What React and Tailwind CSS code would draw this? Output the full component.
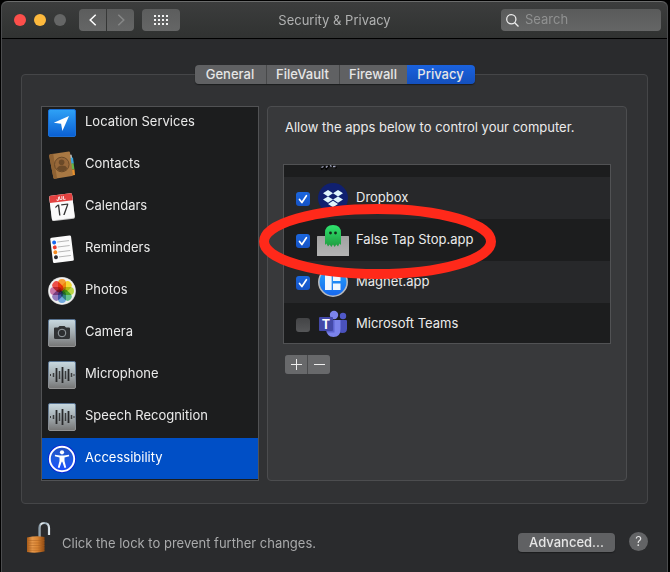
import React from "react";

function LocationIcon() {
  return (
    <svg viewBox="0 0 28 28" className="size-7">
      <defs>
        <linearGradient id="loc" x1="0" y1="0" x2="0" y2="1">
          <stop offset="0" stopColor="#2fa2f6" />
          <stop offset="1" stopColor="#0a5fd3" />
        </linearGradient>
      </defs>
      <rect x="0.5" y="0.5" width="27" height="27" rx="1.5" fill="url(#loc)" stroke="#1a6fd6" />
      <path d="M21 7 5.8 13.8l7.3.9 1.3 7.3z" fill="#fff" />
    </svg>
  );
}

function ContactsIcon() {
  return (
    <svg viewBox="0 0 28 28" className="size-7">
      <path d="M20 3.5l3.6.3.9 6.2-3.5 1z" fill="#c3c9cc" />
      <path d="M21 7l4-.6.8 6-3.8.8z" fill="#3aa5de" />
      <path d="M21 13l4.600-.8.8 6-4.400.8z" fill="#67b548" />
      <path d="M22 19l4.500-.8.5 5.800-4.500.8z" fill="#e8912c" />
      <path d="M2.600 3.200 20.800.5q1-.1 1.200.9l2.800 22.300q.1 1-.9 1.200L6.800 27.700q-1.200.1-1.400-1L1.200 5q-.2-1.500 1.400-1.800z" fill="#a87843" />
      <path d="M2.600 3.200 5.200 2.800 9 27.300l-2.200.4q-1.200.1-1.400-1L1.200 5q-.2-1.500 1.400-1.800z" fill="#8f6233" />
      <circle cx="13.800" cy="13.500" r="7.300" fill="#97683a" stroke="#6b4a28" />
      <circle cx="13.600" cy="11.300" r="2.800" fill="#6b4a28" />
      <path d="M8.900 17.700q1-2.700 4.900-3.100 4.100-.1 5.400 2.300-1.800 3.200-5.300 3.300-3 0-5-2.500z" fill="#6b4a28" />
    </svg>
  );
}

function CalendarIcon() {
  return (
    <svg viewBox="0 0 28 28" className="size-7">
      <g transform="rotate(-7 14 14)">
        <rect x="2.500" y="2" width="23" height="25" rx="1.500" fill="#c9c9c9" />
        <rect x="2.500" y="1.500" width="23" height="24.500" rx="1.500" fill="#fafafa" />
        <path d="M2.500 8.500V3q0-1.500 1.500-1.500h20q1.500 0 1.500 1.500v5.500z" fill="#e2413f" />
        <text x="14" y="7" textAnchor="middle" fontSize="5" fontWeight="700" fill="#fff" fontFamily="Inter, sans-serif">JUL</text>
        <text x="14" y="22.200" textAnchor="middle" fontSize="15" fill="#333" fontFamily="Inter, sans-serif">17</text>
      </g>
    </svg>
  );
}

function RemindersIcon() {
  return (
    <svg viewBox="0 0 28 28" className="size-7">
      <g transform="rotate(-7 14 14)">
        <rect x="3.500" y="1.500" width="21" height="25.500" rx="1.500" fill="#fbfbfb" />
        <g stroke="#aaa" strokeWidth="0.800">
          <path d="M10 6.500h12M10 11.500h12M10 16.500h12M10 21.500h12" />
        </g>
        <circle cx="7" cy="6.500" r="2" fill="#1668f0" />
        <circle cx="7" cy="11.500" r="2" fill="#ea3a30" />
        <circle cx="7" cy="16.500" r="2" fill="#f58a1f" />
        <circle cx="7" cy="21.500" r="2" fill="#2b2b33" />
      </g>
    </svg>
  );
}

const PETALS = ["#f7941e", "#f3d51d", "#b5d334", "#55bd83", "#62a0dc", "#8b70b8", "#c5699f", "#ed3b35"];

function PhotosIcon() {
  return (
    <svg viewBox="0 0 28 28" className="size-7">
      <circle cx="14" cy="14" r="13.900" fill="#bdbdbd" />
      <circle cx="14" cy="13.800" r="13.400" fill="#f0f0f0" />
      <g className="isolate">
        {PETALS.map((fill, i) => (
          <rect key={fill} x="10" y="2" width="8" height="12" rx="4" fill={fill} opacity="0.900" transform={`rotate(${i * 45} 14 14)`} className="mix-blend-multiply" />
        ))}
      </g>
    </svg>
  );
}

function MetalTile({ id, children }) {
  return (
    <svg viewBox="0 0 28 28" className="size-7">
      <defs>
        <linearGradient id={id} x1="0" y1="0" x2="0" y2="1">
          <stop offset="0" stopColor="#c9dae1" />
          <stop offset="0.500" stopColor="#a3acb0" />
          <stop offset="1" stopColor="#757575" />
        </linearGradient>
        <linearGradient id={id + "-edge"} x1="0" y1="0" x2="0" y2="1">
          <stop offset="0" stopColor="#587391" />
          <stop offset="1" stopColor="#929292" />
        </linearGradient>
      </defs>
      <rect x="0.500" y="0.500" width="27" height="27" rx="1.500" fill={`url(#${id})`} stroke={`url(#${id}-edge)`} />
      {children}
    </svg>
  );
}

function CameraIcon() {
  return (
    <MetalTile id="cam">
      <path d="M7 8.500h3l1.500-1.600h5L18 8.500h3q1 0 1 1v9q0 1.500-1.500 1.500h-13Q6 20 6 18.500v-9q0-1 1-1z" fill="#303234" />
      <circle cx="14" cy="14" r="3.800" fill="#2c2e30" stroke="#9aa1a5" strokeWidth="1" />
    </MetalTile>
  );
}

function WaveIcon({ id }) {
  return (
    <MetalTile id={id}>
      <path d="M8.500 7v14M14.500 6v16M20.500 8v12" stroke="#28292a" strokeWidth="1.800" />
      <path d="M11.500 10v8M17.500 10v8M5.500 12v4M23.500 12v4" stroke="#3b3d3e" strokeWidth="1.500" />
      <path d="M2.500 13v2M26 13v2" stroke="#3b3d3e" strokeWidth="1" />
    </MetalTile>
  );
}

function AccessibilityIcon() {
  return (
    <svg viewBox="0 0 28 28" className="size-7">
      <defs>
        <linearGradient id="acc" x1="0" y1="0" x2="0" y2="1">
          <stop offset="0" stopColor="#2450c0" />
          <stop offset="0.500" stopColor="#1f5ce0" />
          <stop offset="1" stopColor="#1b4cff" />
        </linearGradient>
      </defs>
      <circle cx="14" cy="14" r="14" fill="#0a22d8" />
      <circle cx="14" cy="14" r="12.200" fill="url(#acc)" stroke="#fff" strokeWidth="1.900" />
      <circle cx="14" cy="7.300" r="2.100" fill="#fff" />
      <path d="M7 9.700l5 .9h4l5-.9.200 1.500-4.700 1.200v3.600l1.700 6.500-1.700.4-2.200-6.200h-.6l-2.200 6.200-1.700-.4 1.700-6.500v-3.600l-4.700-1.200z" fill="#fff" />
    </svg>
  );
}

function DropboxIcon() {
  return (
    <svg viewBox="0 0 32 32" className="size-8">
      <circle cx="16" cy="15" r="15" fill="#10206f" />
      <path d="M11 7l5 3.200-5 3.200-5-3.200zM21 7l5 3.200-5 3.200-5-3.200zM11 13.400l5 3.200-5 3.200-5-3.200zM21 13.400l5 3.200-5 3.200-5-3.200zM16 17.800l5 3.200-5 3.200-5-3.200z" fill="#def5fd" />
    </svg>
  );
}

function GhostIcon() {
  return (
    <svg viewBox="0 0 32 32" className="size-8">
      <defs>
        <linearGradient id="tray" x1="0" y1="0" x2="0" y2="1">
          <stop offset="0" stopColor="#a2a2a2" />
          <stop offset="1" stopColor="#b3b3b3" />
        </linearGradient>
        <linearGradient id="ghost" x1="0" y1="0" x2="0" y2="1">
          <stop offset="0" stopColor="#2fe46f" />
          <stop offset="1" stopColor="#1f9a3e" />
        </linearGradient>
      </defs>
      <rect x="0" y="11" width="32" height="20" rx="0.500" fill="url(#tray)" />
      <path d="M8 8q0-8 8-8t8 8v12l-1.500-1.500-1.500 3-1.700-2-1.600 2.500-1.700-2.500-1.700 2.500-1.600-2.500-1.700 2-1.500-3L8 20z" fill="url(#ghost)" />
      <circle cx="13.500" cy="8" r="1.400" fill="#122c1a" />
      <circle cx="18.500" cy="8" r="1.400" fill="#122c1a" />
    </svg>
  );
}

function MagnetIcon() {
  return (
    <svg viewBox="0 0 32 32" className="size-8">
      <defs>
        <linearGradient id="mag" x1="0" y1="0" x2="0" y2="1">
          <stop offset="0" stopColor="#25a9fb" />
          <stop offset="1" stopColor="#1766ee" />
        </linearGradient>
      </defs>
      <circle cx="16" cy="15" r="14.200" fill="url(#mag)" stroke="#b9bbbe" strokeWidth="1.600" />
      <path d="M8 8h6.700v15H8zM16 8h7.500v6H16zM16 16.500h7.500V23H16z" fill="#f1f7fd" />
      <path d="M14.700 23V8" stroke="#9ecbf7" strokeWidth="0.500" />
    </svg>
  );
}

function TeamsIcon() {
  return (
    <svg viewBox="0 0 32 32" className="size-8">
      <circle cx="26" cy="7" r="3.200" fill="#5059c9" />
      <path d="M20 11h9q1 0 1 1v7.500q0 4.500-4.500 4.500T20 20z" fill="#4a52bd" />
      <circle cx="17" cy="6" r="4.200" fill="#7b83eb" />
      <path d="M9.500 11h14v9q0 8-7 8t-7-8z" fill="#7b83eb" />
      <path d="M9.500 11h8v12.500h-8z" fill="#5c63cf" />
      <rect x="2" y="8" width="14" height="14" rx="1" fill="#4349a8" />
      <text x="9" y="19.500" textAnchor="middle" fontSize="12.500" fontWeight="700" fill="#fff" fontFamily="Inter, sans-serif">T</text>
    </svg>
  );
}

function LockIcon() {
  return (
    <svg viewBox="0 0 24 32" className="h-8 w-6">
      <defs>
        <linearGradient id="body" x1="0" y1="0" x2="1" y2="0">
          <stop offset="0" stopColor="#a85a17" />
          <stop offset="0.300" stopColor="#e6984a" />
          <stop offset="0.600" stopColor="#d98432" />
          <stop offset="1" stopColor="#8d4710" />
        </linearGradient>
        <linearGradient id="shackle" x1="0" y1="0" x2="1" y2="0">
          <stop offset="0" stopColor="#8fa0ab" />
          <stop offset="0.250" stopColor="#f2f8fb" />
          <stop offset="0.600" stopColor="#8fa3b0" />
          <stop offset="1" stopColor="#dde6ec" />
        </linearGradient>
      </defs>
      <path d="M12.500 16V7q0-5 4.700-5T22 7v7" fill="none" stroke="url(#shackle)" strokeWidth="2.200" />
      <path d="M0 16.500Q9 14.500 17.500 16v14.500Q9 32.500 0 31z" fill="url(#body)" />
      <path d="M0 19.500h17.500M0 22h17.500M0 24.500h17.500M0 27h17.500M0 29.300h17.500" stroke="#a9601f" strokeWidth="0.700" opacity="0.700" />
    </svg>
  );
}

const CATEGORIES = [
  { name: "Location Services", icon: <LocationIcon /> },
  { name: "Contacts", icon: <ContactsIcon /> },
  { name: "Calendars", icon: <CalendarIcon /> },
  { name: "Reminders", icon: <RemindersIcon /> },
  { name: "Photos", icon: <PhotosIcon /> },
  { name: "Camera", icon: <CameraIcon /> },
  { name: "Microphone", icon: <WaveIcon id="mic" /> },
  { name: "Speech Recognition", icon: <WaveIcon id="speech" /> },
  { name: "Accessibility", icon: <AccessibilityIcon />, selected: true },
];

const APPS = [
  { id: "dropbox", name: "Dropbox", icon: <DropboxIcon />, checked: true },
  { id: "fts", name: "False Tap Stop.app", icon: <GhostIcon />, checked: true },
  { id: "magnet", name: "Magnet.app", icon: <MagnetIcon />, checked: true },
  { id: "teams", name: "Microsoft Teams", icon: <TeamsIcon />, checked: false },
];

function TitleBar() {
  return (
    <header className="grid h-[38px] grid-cols-[1fr_auto_1fr] items-center rounded-t-md border-t border-b border-t-[#6b6c6c] border-b-black bg-linear-to-b from-[#3c3d3d] to-[#303231]">
      <div className="flex items-center pl-3">
        <div className="flex gap-2">
          <button aria-label="Close" className="size-3 rounded-full bg-[#fc4f4b]" />
          <button aria-label="Minimize" className="size-3 rounded-full bg-[#fdb93d]" />
          <button aria-label="Zoom" className="size-3 rounded-full bg-[#656666]" />
        </div>
        <div className="ml-[13px] flex gap-px">
          <button aria-label="Back" className="flex h-[22px] w-[27px] items-center justify-center rounded-l bg-linear-to-b from-[#5c5d5d] to-[#656666] text-white">
            <svg viewBox="0 0 8 12" className="h-3 w-2" fill="none" stroke="currentColor" strokeWidth="1.500"><path d="M6.700.7 1.200 6l5.500 5.300" /></svg>
          </button>
          <button aria-label="Forward" className="flex h-[22px] w-[27px] items-center justify-center rounded-r bg-linear-to-b from-[#5c5d5d] to-[#656666] text-[#868787]">
            <svg viewBox="0 0 8 12" className="h-3 w-2" fill="none" stroke="currentColor" strokeWidth="1.500"><path d="M1.300.7 6.800 6l-5.500 5.300" /></svg>
          </button>
        </div>
        <button aria-label="Show All" className="ml-2 flex h-[22px] w-[38px] items-center justify-center rounded bg-linear-to-b from-[#5c5d5d] to-[#656666]">
          <svg viewBox="0 0 14 10" className="h-[10px] w-[14px]" fill="#f2f2f2">
            {[0, 4, 8].map((y) => [0, 4, 8, 12].map((x) => <rect key={`${x}-${y}`} x={x} y={y} width="2" height="2" />))}
          </svg>
        </button>
      </div>
      <h1 className="pt-0.5 text-[13px] text-[#b0b1b1]">Security &amp; Privacy</h1>
      <div className="flex justify-end pr-1.5">
        <label className="flex h-[22px] w-40 items-center gap-1.5 rounded bg-linear-to-b from-[#5a5b5b] to-[#656666] pl-[5px]">
          <svg viewBox="0 0 13 13" className="size-[13px] shrink-0" fill="none" stroke="#ededed" strokeWidth="1.300"><circle cx="5.300" cy="5.300" r="4.600" /><path d="m8.700 8.700 3.800 3.800" /></svg>
          <input type="search" aria-label="Search" placeholder="Search" className="w-full min-w-0 bg-transparent text-[13px] outline-none placeholder:text-[#909191]" />
        </label>
      </div>
    </header>
  );
}

function Tabs() {
  const base = "h-[19px] text-[13px] leading-[19px] font-medium text-[#e6e6e6]";
  return (
    <nav className="relative z-10 -mb-[10px] flex justify-center">
      <div className="flex overflow-hidden rounded shadow-[0_1px_1px_#1b1c1d]">
        <button className={`${base} w-[72px] border-r border-[#48494a] bg-[#606163]`}>General</button>
        <button className={`${base} w-[73px] border-r border-[#48494a] bg-[#606163]`}>FileVault</button>
        <button className={`${base} w-[67px] bg-[#606163]`}>Firewall</button>
        <button className={`${base} w-[68px] bg-linear-to-b from-[#1a62de] to-[#1450bd]`}>Privacy</button>
      </div>
    </nav>
  );
}

function Sidebar() {
  return (
    <nav className="w-[218px] shrink-0 overflow-hidden border border-[#515254] bg-[#1c1d1e]">
      <ul className="-mt-[5px] pb-px">
        {CATEGORIES.map((c) => (
          <li key={c.name}>
            <button className={`flex w-full gap-[9px] pl-1.5 text-left ${c.selected ? "h-[41px] bg-[#004fc6] text-white" : "h-[42px] text-[#ebebeb]"}`}>
              <span className="pt-[7px]">{c.icon}</span>
              <span className="pt-[9px] text-[13px] leading-5">{c.name}</span>
            </button>
          </li>
        ))}
      </ul>
    </nav>
  );
}

function AppRow({ app, shaded }) {
  return (
    <li className={shaded ? "bg-[#27282a]" : "bg-[#1c1d1e]"}>
      <label className="flex h-[42px] pl-3">
        <span className="mt-[15px] grid size-3.5 shrink-0">
          <input
            type="checkbox"
            id={app.id}
            defaultChecked={app.checked}
            className="peer col-start-1 row-start-1 size-3.5 appearance-none rounded-[3px] bg-linear-to-b from-[#434446] to-[#555658] checked:from-[#1b66dd] checked:to-[#1553c6]"
          />
          <svg viewBox="0 0 14 14" className="pointer-events-none invisible col-start-1 row-start-1 size-3.5 peer-checked:visible" fill="none" stroke="#fff" strokeWidth="1.700" strokeLinecap="round" strokeLinejoin="round"><path d="m3.500 7.500 2.400 3 4.500-6.800" /></svg>
        </span>
        <span className="ml-[7px] shrink-0 pt-1.5">{app.icon}</span>
        <span className="ml-[7px] pt-[10px] text-[13px] leading-5 text-[#ebebeb]">{app.name}</span>
      </label>
    </li>
  );
}

function AppsPanel() {
  return (
    <section className="min-w-0 flex-1 rounded border border-[#4c4d4f] bg-[#38393b] px-[15px]">
      <p className="mt-[10px] ml-0.5 text-[13px] leading-5 text-[#ebebeb]">Allow the apps below to control your computer.</p>
      <div className="relative mt-[27px]">
        <ul className="h-[180px] overflow-hidden border border-[#515254] bg-[#1c1d1e]">
          <li aria-hidden="true" className="h-3 pl-[36px]">
            <svg viewBox="0 0 20 6" className="h-1.5 w-5" fill="none">
              <path d="M1 4.500 5 1.500M5.500 4.500l4-4M12.500.5l4 2.500" stroke="#050505" strokeWidth="2" />
              <path d="M1.500 2.500l2-1M6 2.500l1.500-1.500M10 .5l1.500 1M13 1.500h2.500" stroke="#a5a8c0" strokeWidth="1.300" />
            </svg>
          </li>
          {APPS.map((app, i) => (
            <AppRow key={app.id} app={app} shaded={i % 2 === 0} />
          ))}
        </ul>
        <svg viewBox="0 0 238 75" className="pointer-events-none absolute top-10 -left-6 h-[75px] w-[238px]">
          <ellipse cx="118.500" cy="37.500" rx="113.500" ry="32.500" fill="none" stroke="#ff291a" strokeWidth="10" />
        </svg>
      </div>
      <div className="mt-[11px] ml-0.5 inline-flex gap-px overflow-hidden rounded-[3px] bg-[#4a4b4d]">
        <button aria-label="Add" className="flex h-[19px] w-[22px] items-center justify-center bg-[#68696b]">
          <svg viewBox="0 0 11 11" className="size-[11px]" stroke="#eee" strokeWidth="1"><path d="M0 5.500h11M5.500 0v11" /></svg>
        </button>
        <button aria-label="Remove" className="flex h-[19px] w-[22px] items-center justify-center bg-[#68696b]">
          <svg viewBox="0 0 11 11" className="size-[11px]" stroke="#eee" strokeWidth="1"><path d="M0 5.500h11" /></svg>
        </button>
      </div>
    </section>
  );
}

export default function App() {
  return (
    <div className="min-h-screen bg-black pt-px pr-0.5 pl-px font-['Inter',sans-serif]">
      <div className="flex min-h-[calc(100vh-1px)] flex-col rounded-t-md border-x border-[#4b4c4e] bg-[#2a2b2d]">
        <TitleBar />
        <main className="px-[19px] pt-[26px]">
          <Tabs />
          <div className="flex gap-2 rounded border border-[#454648] bg-[#313234] pt-[31px] pr-5 pb-[22px] pl-[19px]">
            <Sidebar />
            <AppsPanel />
          </div>
        </main>
        <footer className="flex items-start pt-[17px] pr-[19px] pl-[25px]">
          <button aria-label="Unlocked">
            <LockIcon />
          </button>
          <p className="mt-3 ml-[11px] text-[13px] leading-5 text-[#a9aaab]">Click the lock to prevent further changes.</p>
          <button className="mt-3 ml-auto h-[19px] w-[97px] rounded bg-[#606163] text-[13px] leading-[19px] font-medium text-[#e6e6e6] shadow-[0_1px_1px_#1b1c1d]">Advanced...</button>
          <button aria-label="Help" className="mt-[11px] ml-[14px] size-[19px] rounded-full bg-[#636466] text-[13px] leading-[19px] text-[#e6e6e6]">?</button>
        </footer>
      </div>
    </div>
  );
}
